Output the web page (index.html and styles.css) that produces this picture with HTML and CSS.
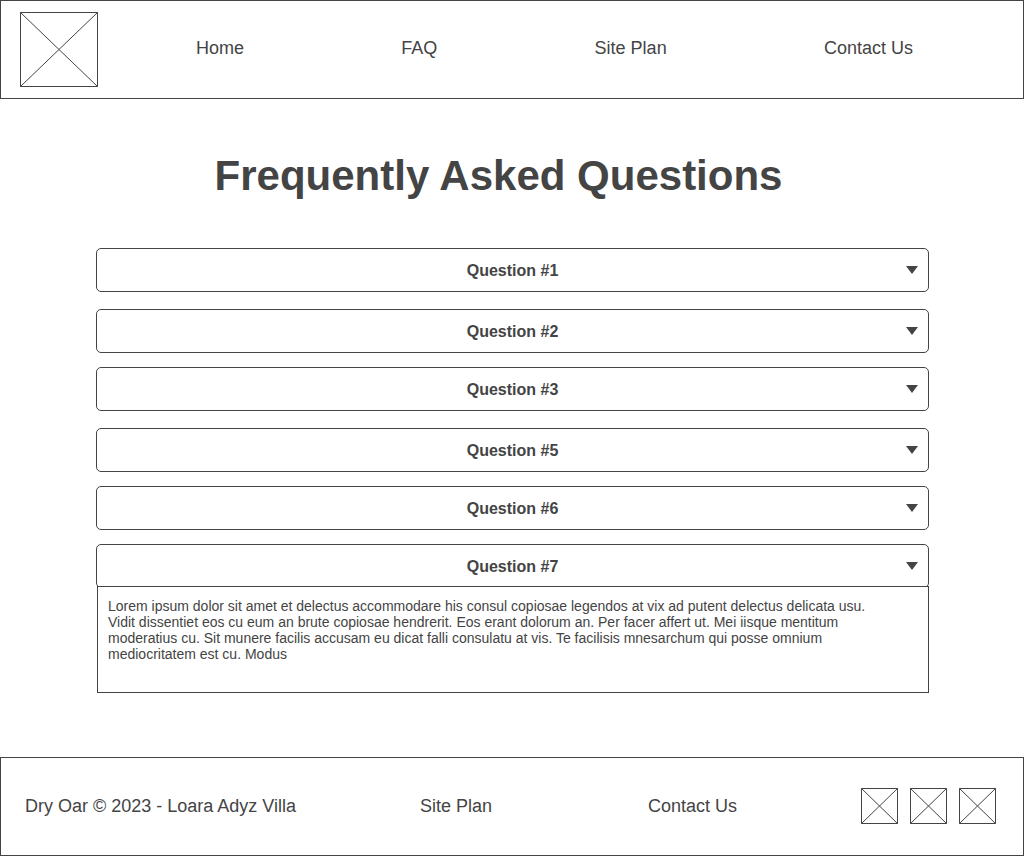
FILE: index.html
```html
<!DOCTYPE html>
<html lang="en">
<head>
<meta charset="utf-8">
<meta name="viewport" content="width=device-width, initial-scale=1">
<title>Frequently Asked Questions</title>
<link rel="stylesheet" href="styles.css">
</head>
<body>
<header class="bar site-header">
  <svg class="placeholder logo" viewBox="0 0 78 75" role="img" aria-label="Logo"><path d="M.5.5h77v74H.5zM.5.5l77 74M77.5.5l-77 74"/></svg>
  <nav class="main-nav" aria-label="Main">
    <a href="#">Home</a>
    <a href="#">FAQ</a>
    <a href="#">Site Plan</a>
    <a href="#">Contact Us</a>
  </nav>
</header>
<main class="content">
  <h1 class="title">Frequently Asked Questions</h1>
  <div class="faq">
    <button class="question" type="button" aria-expanded="false">Question #1<svg class="arrow" viewBox="0 0 12 8" aria-hidden="true"><path d="M0 0h12L6 8z"/></svg></button>
    <button class="question spaced" type="button" aria-expanded="false">Question #2<svg class="arrow" viewBox="0 0 12 8" aria-hidden="true"><path d="M0 0h12L6 8z"/></svg></button>
    <button class="question" type="button" aria-expanded="false">Question #3<svg class="arrow" viewBox="0 0 12 8" aria-hidden="true"><path d="M0 0h12L6 8z"/></svg></button>
    <button class="question spaced" type="button" aria-expanded="false">Question #5<svg class="arrow" viewBox="0 0 12 8" aria-hidden="true"><path d="M0 0h12L6 8z"/></svg></button>
    <button class="question" type="button" aria-expanded="false">Question #6<svg class="arrow" viewBox="0 0 12 8" aria-hidden="true"><path d="M0 0h12L6 8z"/></svg></button>
    <button class="question" type="button" aria-expanded="true" aria-controls="answer-7">Question #7<svg class="arrow" viewBox="0 0 12 8" aria-hidden="true"><path d="M0 0h12L6 8z"/></svg></button>
    <div class="answer" id="answer-7">
      <p>Lorem ipsum dolor sit amet et delectus accommodare his consul copiosae legendos at vix ad putent delectus delicata usu. Vidit dissentiet eos cu eum an brute copiosae hendrerit. Eos erant dolorum an. Per facer affert ut. Mei iisque mentitum moderatius cu. Sit munere facilis accusam eu dicat falli consulatu at vis. Te facilisis mnesarchum qui posse omnium mediocritatem est cu. Modus</p>
    </div>
  </div>
</main>
<footer class="bar site-footer">
  <p class="copyright">Dry Oar © 2023 - Loara Adyz Villa</p>
  <nav class="footer-nav" aria-label="Footer">
    <a href="#">Site Plan</a>
    <a href="#">Contact Us</a>
  </nav>
  <div class="social">
    <svg class="placeholder icon" viewBox="0 0 37 36" role="img" aria-label="Social link"><path d="M.5.5h36v35H.5zM.5.5l36 35M36.5.5l-36 35"/></svg>
    <svg class="placeholder icon" viewBox="0 0 37 36" role="img" aria-label="Social link"><path d="M.5.5h36v35H.5zM.5.5l36 35M36.5.5l-36 35"/></svg>
    <svg class="placeholder icon" viewBox="0 0 37 36" role="img" aria-label="Social link"><path d="M.5.5h36v35H.5zM.5.5l36 35M36.5.5l-36 35"/></svg>
  </div>
</footer>
</body>
</html>
```

FILE: styles.css
```css
* {
  box-sizing: border-box;
}

body {
  margin: 0;
  background: #fff;
  color: #444;
  font-family: "Liberation Sans", Arial, sans-serif;
  font-size: 18px;
  line-height: 20px;
}

p {
  margin: 0;
}

a {
  color: inherit;
  text-decoration: none;
}

.bar {
  display: flex;
  align-items: center;
  border: 1px solid #444;
}

.placeholder {
  display: block;
  flex: none;
  fill: none;
  stroke: #444;
  stroke-width: 1;
}

.site-header {
  padding: 11px 110px 11px 19px;
  gap: 98px;
}

.logo {
  width: 78px;
  height: 75px;
}

.main-nav {
  flex: 1;
  display: flex;
  justify-content: space-between;
  padding-bottom: 3px;
}

.content {
  padding: 52px 95px 64px 96px;
}

.title {
  margin: 0 0 48px;
  padding-right: 28px;
  font-size: 42px;
  line-height: 49px;
  text-align: center;
}

.faq {
  display: flex;
  flex-direction: column;
}

.question {
  display: grid;
  grid-template-columns: 1fr auto 1fr;
  align-items: center;
  height: 44px;
  margin: 14px 0 0;
  padding: 0 10px;
  border: 1px solid #444;
  border-radius: 5px;
  background: #fff;
  color: inherit;
  font: bold 16px/19px "Liberation Sans", Arial, sans-serif;
}

.question::before {
  content: "";
}

.question.spaced {
  margin-top: 17px;
}

.question:first-child {
  margin-top: 0;
}

.arrow {
  width: 12px;
  height: 8px;
  justify-self: end;
  fill: #444;
}

.answer {
  min-height: 107px;
  margin: -2px 0 0 1px;
  padding: 11px 40px 30px 10px;
  border: 1px solid #444;
  background: #fff;
  font-size: 14px;
  line-height: 16px;
}

.site-footer {
  justify-content: space-between;
  padding: 30px 27px 31px 24px;
}

.footer-nav {
  display: flex;
  gap: 156px;
}

.social {
  display: flex;
  gap: 12px;
}

.icon {
  width: 37px;
  height: 36px;
}
```
